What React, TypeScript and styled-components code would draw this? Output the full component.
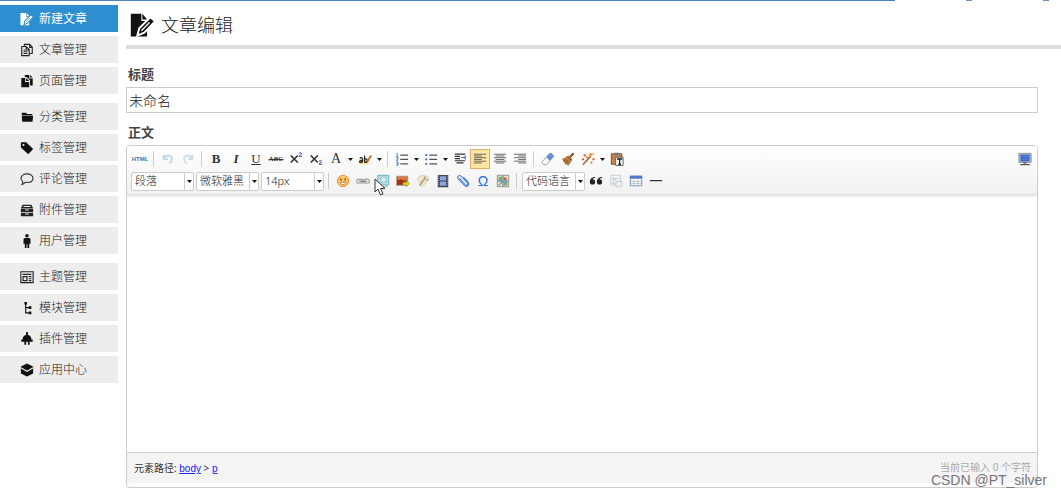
import React from "react";
import styled, { createGlobalStyle } from "styled-components";

const GlobalStyle = createGlobalStyle`
  * { box-sizing: border-box; }
  body {
    margin: 0;
    background: #fff;
    color: #333;
    font-family: "Noto Sans", "Noto Sans CJK SC", sans-serif;
    font-size: 12px;
  }
  svg { display: block; flex: none; }
`;

const Page = styled.div`
  position: relative;
  padding-bottom: 8px;
`;

const TopStrip = styled.div`
  display: flex;
  gap: 71px;
  height: 1px;
  padding-right: 12px;
`;
const TopLine = styled.div`
  flex: 1;
  background: #4c83bb;
`;
const TopMark = styled.div`
  width: 6px;
  background: #6f8fc0;
`;

const Columns = styled.div`
  display: flex;
`;

const Sidebar = styled.nav`
  flex: none;
  width: 118px;
  display: flex;
  flex-direction: column;
  gap: 9px;
  padding-top: 4px;
`;
const NavGroup = styled.div`
  display: flex;
  flex-direction: column;
  gap: 4px;
`;
const NavLink = styled.a<{ $active?: boolean }>`
  display: flex;
  align-items: center;
  gap: 5px;
  height: 27px;
  padding-left: 20px;
  font-size: 12px;
  font-weight: ${(p) => (p.$active ? 400 : 300)};
  line-height: 26px;
  text-decoration: none;
  color: ${(p) => (p.$active ? "#fff" : "#222")};
  background: ${(p) => (p.$active ? "#2d8fcf" : "#ededed")};
`;

const Main = styled.main`
  flex: 1;
  min-width: 0;
  padding-left: 8px;
`;
const Heading = styled.header`
  display: flex;
  align-items: center;
  gap: 5px;
  height: 48px;
  padding: 6px 0 3px 4px;
  border-bottom: 4px solid #dedede;
  color: #111;
  h1 {
    margin: 0;
    font-size: 18px;
    font-weight: 300;
    line-height: 24px;
    color: #222;
  }
`;
const Form = styled.form`
  padding: 15px 23px 0 0;
`;
const Label = styled.label`
  display: block;
  padding: 0 2px;
  height: 23px;
  line-height: 20px;
  font-size: 13px;
  font-weight: 700;
  color: #444;
`;
const TitleInput = styled.input`
  display: block;
  width: 100%;
  height: 26px;
  margin-bottom: 9px;
  padding: 0 2px;
  border: 1px solid #ccc;
  font-family: inherit;
  font-size: 14px;
  font-weight: 300;
  color: #222;
  outline: none;
`;

const Editor = styled.section`
  border: 1px solid #ccc;
  border-radius: 4px;
  overflow: hidden;
  background: #fff;
`;
const Toolbar = styled.div`
  padding: 2px 2px 2px 3px;
  background: linear-gradient(#fff, #f1f1f1);
  border-bottom: 1px solid #dedede;
  box-shadow: 0 1px 3px #ddd;
`;
const ToolRow = styled.div`
  display: flex;
  align-items: center;
  height: 22px;
`;
const Tool = styled.button<{ $on?: boolean; $faded?: boolean }>`
  position: relative;
  display: flex;
  align-items: center;
  justify-content: center;
  flex: none;
  width: 20px;
  height: 20px;
  padding: 0;
  border: 1px solid ${(p) => (p.$on ? "#dcac6c" : "transparent")};
  background: ${(p) => (p.$on ? "#ffe69f" : "transparent")};
  svg { opacity: ${(p) => (p.$faded ? 0.4 : 1)}; }
`;
const ArrowButton = styled.button`
  display: flex;
  align-items: center;
  justify-content: center;
  flex: none;
  width: 9px;
  height: 20px;
  padding: 0;
  border: 0;
  background: transparent;
`;
const Separator = styled.span`
  flex: none;
  width: 1px;
  height: 16px;
  margin: 0 4px 0 3px;
  background: #ccc;
`;
const Spacer = styled.span`
  flex: 1;
`;
const Picker = styled.span`
  display: flex;
  flex: none;
  align-items: center;
  width: 63px;
  height: 19px;
  margin: 0 1px;
  border: 1px solid #ccc;
  border-radius: 2px;
  background: #fff;
`;
const PickerSelect = styled.select`
  appearance: none;
  width: 53px;
  height: 17px;
  padding: 0 0 0 3px;
  border: 0;
  border-right: 1px solid #ccc;
  background: transparent;
  font-family: inherit;
  font-size: 11px;
  font-weight: 300;
  line-height: 16px;
  color: #222;
  outline: none;
`;
const PickerArrow = styled.span`
  flex: 1;
  display: flex;
  justify-content: center;
`;
const Content = styled.textarea`
  display: block;
  width: 100%;
  height: 257px;
  padding: 8px;
  border: 0;
  resize: none;
  outline: none;
  background: transparent;
  font-family: inherit;
  font-size: 14px;
`;
const StatusBar = styled.footer`
  display: flex;
  justify-content: space-between;
  height: 31px;
  padding: 0 6px 0 7px;
  margin-bottom: 4px;
  border-top: 1px solid #ccc;
  background: #f4f4f5;
  font-size: 10px;
  line-height: 30px;
  color: #333;
  a { color: #22e; font-family: "Liberation Sans", sans-serif; }
`;
const Count = styled.span`
  line-height: 28px;
  color: #aaa;
`;
const Watermark = styled.div`
  position: absolute;
  right: 14px;
  bottom: 6px;
  font-family: "Liberation Sans", Arial, sans-serif;
  font-size: 14px;
  line-height: 20px;
  color: #777;
`;
const Pointer = styled.span`
  position: absolute;
  left: 0;
  top: 6px;
  pointer-events: none;
`;

const Svg = ({ children, size = 14 }: { children: React.ReactNode; size?: number }) => (
  <svg width={size} height={size} viewBox="0 0 16 16" fill="none" aria-hidden="true">
    {children}
  </svg>
);

const Caret = () => (
  <svg width="5" height="3" viewBox="0 0 5 3" aria-hidden="true">
    <path d="M0 0h5L2.5 3z" fill="#111" />
  </svg>
);

const MousePointer = () => (
  <Pointer>
    <svg width="12" height="18" viewBox="0 0 12 18" aria-hidden="true">
      <path d="M1 1v13l3-3 2.500 6 2.500-1-2.500-5.500H11z" fill="#fff" stroke="#333" />
    </svg>
  </Pointer>
);

const EditPage = ({ size, halo }: { size: number; halo: string }) => (
  <Svg size={size}>
    <path d="M.5 1H7v4.500h3.500V15H.5z" fill="currentColor" />
    <path d="M7.600 1l3 3.600h-3z" fill="currentColor" />
    <path d="M4.500 14.500L5.700 10l6.800-6.800 3 2.500-6.700 7z" fill="currentColor" stroke={halo} strokeWidth="1.200" />
    <path d="M7 11.500l5-5" stroke={halo} strokeWidth=".8" />
  </Svg>
);

const navIcons: Record<string, React.ReactNode> = {
  articles: (
    <g stroke="#222" strokeWidth="1.300">
      <path d="M5 4V1.500h6L14 4.500V12h-3M11 1.500V5h3" />
      <path d="M2 4h5l3.500 3.500v7H2zM7 4v4h3.500M4 8h2M4 10h4.500M4 12h4.500" />
    </g>
  ),
  pages: (
    <g fill="#111">
      <path d="M5.500 1h5v4h4v8h-3V7L7.500 3.500h-2zM11.500 1l3 3h-3z" />
      <path d="M1.500 4.500H6V9h4.500v6h-9zM7 4.500L10.500 8H7z" />
    </g>
  ),
  folder: <path d="M2 3h5l1 1.500h6V6H2zM2 6.500h13l-.7 7H2.500z" fill="#111" />,
  tag: <path fillRule="evenodd" d="M1 2.500Q1 1.500 2 1.500h5L15 9l-5.500 6L1 7.500zM4 3.300a1.200 1.200 0 100 2.400 1.200 1.200 0 000-2.400z" fill="#111" />,
  comment: <path d="M8 2.200c4 0 6.800 2 6.800 4.900S12 12 8 12c-.8 0-1.300 0-2-.2C5 13 3.800 14 2.200 14.300c.8-1 1-2 1-3.300C1.800 10 1.200 8.700 1.200 7.100c0-2.900 2.800-4.900 6.800-4.900z" stroke="#333" strokeWidth="1.300" />,
  drawer: (
    <g>
      <path d="M3 2h10l2 4H1zM1 6.700h14v3.600H1zM1 11h14v4H1z" fill="#222" />
      <path d="M4 4h8M6 8h4M6 12.500h4" stroke="#eee" strokeWidth="1.200" />
    </g>
  ),
  user: <path d="M8 0a2 2 0 110 4 2 2 0 010-4zM5.500 4.700h5Q12 5 12 6.500V11h-1.500v5h-2v-4h-1v4h-2v-5H4V6.500Q4 5 5.500 4.700z" fill="#111" />,
  theme: <path d="M1 2h14v12.500H1zM3 5h10M3.500 7.500H8v4.700H3.500zM10 7.500h3M10 10h3M10 12.200h3" stroke="#222" strokeWidth="1.300" />,
  tree: (
    <g fill="#111">
      <path d="M5 1h3v3H5zM10 6h3v3h-3zM10 12h3v3h-3z" />
      <path d="M6.500 3v10.500H11M6.500 7.500H11" stroke="#111" strokeWidth="1.300" fill="none" />
    </g>
  ),
  plug: <path d="M7 0h2v3q4 1 4 5.500h1.500V11H11v3.500H9V11H7v3.500H5V11H1.500V8.500H3Q3 4 7 3z" fill="#111" />,
  cube: (
    <g>
      <path d="M8 .5L15 4v8l-7 3.500L1 12V4z" fill="#111" />
      <path d="M1 5.500l7 4 7-4" stroke="#eee" strokeWidth="1.200" />
    </g>
  ),
};

const groups = [
  [
    { text: "新建文章", icon: "edit" },
    { text: "文章管理", icon: "articles" },
    { text: "页面管理", icon: "pages" },
  ],
  [
    { text: "分类管理", icon: "folder" },
    { text: "标签管理", icon: "tag" },
    { text: "评论管理", icon: "comment" },
    { text: "附件管理", icon: "drawer" },
    { text: "用户管理", icon: "user" },
  ],
  [
    { text: "主题管理", icon: "theme" },
    { text: "模块管理", icon: "tree" },
    { text: "插件管理", icon: "plug" },
    { text: "应用中心", icon: "cube" },
  ],
];

const Glyph = styled.span<{ $size?: number; $serif?: boolean; $bold?: boolean; $italic?: boolean; $line?: string; $tone?: string }>`
  font-family: ${(p) => (p.$serif ? '"Liberation Serif", serif' : '"Liberation Sans", sans-serif')};
  font-size: ${(p) => p.$size ?? 13}px;
  font-weight: ${(p) => (p.$bold ? 700 : 400)};
  font-style: ${(p) => (p.$italic ? "italic" : "normal")};
  text-decoration: ${(p) => p.$line ?? "none"};
  line-height: 16px;
  color: ${(p) => p.$tone ?? "#333"};
  white-space: nowrap;
`;

const lines = (rows: [number, number][]) => (
  <path d={rows.map(([x, w], i) => `M${x} ${2.5 + i * 2}h${w}`).join("")} stroke="#555" strokeWidth="1" />
);

type ToolDef = { name: string; face: React.ReactNode; arrow?: boolean; on?: boolean; faded?: boolean };

const history: ToolDef[] = [
  { name: "撤销", faded: true, face: <Svg><path d="M3 3v5h5M3 8c2-5 9-5 9.500 0 0 2-1 3.500-3 5" stroke="#5d9fd6" strokeWidth="2" /></Svg> },
  { name: "重做", faded: true, face: <Svg><path d="M13 3v5H8M13 8c-2-5-9-5-9.500 0 0 2 1 3.500 3 5" stroke="#8bb0ca" strokeWidth="2" /></Svg> },
];

const textTools: ToolDef[] = [
  { name: "加粗", face: <Glyph $serif $bold>B</Glyph> },
  { name: "斜体", face: <Glyph $serif $bold $italic>I</Glyph> },
  { name: "下划线", face: <Glyph $serif $line="underline">U</Glyph> },
  { name: "删除线", face: <Glyph $serif $bold $size={7} $line="line-through">ABC</Glyph> },
  {
    name: "上标",
    face: <Svg><path d="M2 4l8 8M10 4l-8 8" stroke="#333" strokeWidth="1.900" /><path d="M11.500 2c.3-2 3.500-1.500 2.500.3L11.500 5H15" stroke="#33b" strokeWidth="1" /></Svg>,
  },
  {
    name: "下标",
    face: <Svg><path d="M2 4l8 8M10 4l-8 8" stroke="#333" strokeWidth="1.900" /><path d="M11.500 11c.3-2 3.500-1.500 2.500.3L11.500 14H15" stroke="#335" strokeWidth="1" /></Svg>,
  },
  { name: "字体颜色", arrow: true, face: <Glyph $serif $size={14}>A</Glyph> },
  {
    name: "背景色",
    arrow: true,
    face: (
      <Svg>
        <path d="M1 8h11v6H1z" fill="#ffe08a" />
        <path d="M2 7q3-1.500 3 1v4M5 9.500c-4-.3-4 3-1.500 2.500L5 11M7.500 4v8M7.500 8c4-1.500 4 4 0 4" stroke="#222" strokeWidth="1.400" />
        <path d="M10 12l5-8" stroke="#b8651e" strokeWidth="1.800" />
      </Svg>
    ),
  },
];

const blockTools: ToolDef[] = [
  {
    name: "有序列表",
    arrow: true,
    face: <Svg><path d="M2.500 1v4M1.500 5h2M1.500 6.500h2V8l-2 1.500h2M1.500 11.500h2v3.500h-2M2 13.200h1.500" stroke="#3a6fb5" /><path d="M6 3.500h9M6 8.500h9M6 13.500h9" stroke="#555" strokeWidth="1.300" /></Svg>,
  },
  {
    name: "无序列表",
    arrow: true,
    face: <Svg><path d="M1.500 2.500h2v2h-2zM1.500 7.500h2v2h-2zM1.500 12.500h2v2h-2z" fill="#3958bd" /><path d="M6 3.500h9M6 8.500h9M6 13.500h9" stroke="#555" strokeWidth="1.300" /></Svg>,
  },
  {
    name: "首行缩进",
    face: <Svg><path d="M2 2.500h12M2 5h6M2 7.500h6M2 10h12M4 12.500h8" stroke="#333" strokeWidth="1.400" /><path d="M9 6.300h5M14 4v4.500" stroke="#3d6fbd" strokeWidth="1.300" /></Svg>,
  },
  { name: "居左对齐", on: true, face: <Svg>{lines([[1, 14], [1, 9], [1, 14], [1, 9], [1, 14], [1, 9]])}</Svg> },
  { name: "居中对齐", face: <Svg>{lines([[1, 14], [3, 10], [1, 14], [3, 10], [1, 14], [3, 10]])}</Svg> },
  { name: "居右对齐", face: <Svg>{lines([[1, 14], [6, 9], [1, 14], [6, 9], [1, 14], [6, 9]])}</Svg> },
];

const formatTools: ToolDef[] = [
  {
    name: "清除格式",
    face: <Svg><path d="M1.500 11L9.500 2q1-1 2 0L14 4q1 1 0 2l-8 8.500H3.500L1.500 13z" fill="#fff" stroke="#8793a9" /><path d="M6 6l4-4.500q1-.7 2 0l2 2q.8 1 0 2L10 10z" fill="#678bd2" /></Svg>,
  },
  {
    name: "格式刷",
    face: <Svg><path d="M10 6l4.500-4.500" stroke="#854e23" strokeWidth="2.400" /><path d="M1 8l8-4 4 4-4 7.500H7.500l-1-2-1 1.500z" fill="#bf8442" /><path d="M7 5l5.500 5M3 9l5 5M5 8l4 4" stroke="#60401f" strokeWidth=".9" /></Svg>,
  },
  {
    name: "自动排版",
    arrow: true,
    face: <Svg><path d="M2 14.500L11 5" stroke="#a86b36" strokeWidth="1.800" /><path d="M11 1v4M9 3h4" stroke="#ef8a27" strokeWidth="1.600" /><path d="M3 2.500h2.500V5H3zM1 7h2.500v2.500H1zM13 7h2.500v2.500H13zM11 11h2v2h-2zM6 5h2v2H6z" fill="#e7623b" /><path d="M13 1h2v2h-2z" fill="#f1b32b" /></Svg>,
  },
  {
    name: "纯文本粘贴",
    face: <Svg><path d="M1.500 2h12v12h-12z" fill="#c28646" stroke="#6f4525" /><path d="M5 .8h5v3H5z" fill="#777" /><path d="M6.500 6H15v9.500H6.500z" fill="#fff" stroke="#555" /><path d="M8 8h6M11 8v6M9.500 14h3" stroke="#123" strokeWidth="1.500" /></Svg>,
  },
];

const insertTools: ToolDef[] = [
  {
    name: "表情",
    face: <Svg><circle cx="8" cy="8" r="6.500" fill="#ffc86a" stroke="#e28a35" /><path d="M5.500 5v2.500M10.500 5v2.500" stroke="#85410d" strokeWidth="1.600" /><path d="M4.500 9.500c1.500 3.500 5.500 3.500 7 0z" fill="#fff" stroke="#a85f22" strokeWidth=".8" /></Svg>,
  },
  {
    name: "超链接",
    face: <Svg><path d="M6 6H3a2 2 0 000 4.500h3M10 6h3a2 2 0 010 4.500h-3M6.500 6.500h3V10h-3z" stroke="#aaa" strokeWidth="1.500" /><path d="M3.500 8.300h9" stroke="#777" strokeWidth="1.200" /></Svg>,
  },
  {
    name: "图片上传",
    face: (
      <>
        <Svg><path d="M2 1.500h12.500v11H2z" fill="#b9dfea" stroke="#64a9bd" /><path d="M5.500 3.500h6v6h-6z" fill="#dff3f5" stroke="#83bccb" /><path d="M6 14.500h7" stroke="#71aabb" /></Svg>
        <MousePointer />
      </>
    ),
  },
  {
    name: "多图上传",
    face: <Svg><path d="M.5 2.500h13V13H.5z" fill="#77452c" stroke="#b5a898" /><path d="M1.500 3.500h11V7h-11z" fill="#e8793b" /><path d="M1.500 7l5-1 3 3v3h-8z" fill="#a82c1a" /><path d="M8 9.500h3.500v-2l4 3.500-4 3.500v-2H8z" fill="#f3bd22" stroke="#8fa329" strokeWidth=".8" /></Svg>,
  },
  {
    name: "涂鸦",
    face: <Svg><path d="M3 3q5-3 10 0 3 4-2 6 0 5-6 5 1-3-1-5-4-2-1-6z" fill="#eee7d2" stroke="#d7d0bd" /><path d="M4 13l7-9" stroke="#c2ad6f" strokeWidth="2" /><path d="M9 3h2v2H9zM12 6h2v2h-2zM6 8h2v2H6z" fill="#8fa58d" /></Svg>,
  },
  {
    name: "视频",
    face: <Svg><path d="M2 1h12v14H2z" fill="#3c4251" /><path d="M4.500 2.500h7v5h-7zM4.500 8.500h7v5h-7z" fill="#8da4dd" /><path d="M3.200 2v12M12.800 2v12" stroke="#ccd" strokeDasharray="1 1.500" /></Svg>,
  },
  {
    name: "附件",
    face: <Svg><path d="M4 5l6.500 7c1.800 1.800 4-.2 2.300-2.200L6 2.600C3.700.4.500 3.300 2.700 5.800l6.600 7c3.300 3.300 7.500-.4 4.200-4L8.500 3.500" stroke="#4d87d3" strokeWidth="1.200" /></Svg>,
  },
  { name: "特殊字符", face: <Glyph $size={14} $tone="#2465d8">Ω</Glyph> },
  {
    name: "地图",
    face: <Svg><path d="M1.500 1.500h13v13h-13z" fill="#eee5b6" stroke="#888" /><path d="M3 3h4v4H3zM9 9h4v4H9z" fill="#74aa6a" /><path d="M8 2v12M2 8h12M3 13l4-4" stroke="#6f8fc8" strokeWidth="1.500" /><path d="M9 4h3v3H9z" fill="#c8504a" /></Svg>,
  },
];

const tailTools: ToolDef[] = [
  {
    name: "引用",
    face: <Svg><path d="M7 3.500C3 3.500 1 6 1 9a3 3 0 103-3c.5-1 1.500-1.500 3-1.500zM15 3.500C11 3.500 9 6 9 9a3 3 0 103-3c.5-1 1.500-1.500 3-1.500z" fill="#222" /></Svg>,
  },
  {
    name: "分页",
    faded: true,
    face: <Svg><path d="M2 1.500h11v11H2z" fill="#eef5fa" stroke="#789" /><path d="M4 4l1 3 1-2 1 2 1-3M9 5h2" stroke="#3d6fa5" /><path d="M8 8.500h6.500v6H8z" fill="#ddeaf2" stroke="#68a" /><path d="M3 9h4M3 11h4" stroke="#789" /></Svg>,
  },
  {
    name: "插入表格",
    face: <Svg><path d="M1.500 2.500h13v11h-13z" fill="#fff" stroke="#6589b5" /><path d="M1 2h14v3.500H1z" fill="#5079cd" /><path d="M2 8.500h12M2 11h12M5.500 6v7.500M10 6v7.500" stroke="#a9b8cf" strokeWidth=".9" /></Svg>,
  },
  { name: "分隔线", face: <Svg><path d="M1 7.500h14" stroke="#333" strokeWidth="1.400" /></Svg> },
];

const Tools = ({ items }: { items: ToolDef[] }) => (
  <>
    {items.map((t) => (
      <React.Fragment key={t.name}>
        <Tool type="button" aria-label={t.name} $on={t.on} $faded={t.faded}>
          {t.face}
        </Tool>
        {t.arrow && (
          <ArrowButton type="button" aria-label={`${t.name}选项`}>
            <Caret />
          </ArrowButton>
        )}
      </React.Fragment>
    ))}
  </>
);

const Select = ({ label, value }: { label: string; value: string }) => (
  <Picker>
    <PickerSelect aria-label={label} defaultValue={value}>
      <option>{value}</option>
    </PickerSelect>
    <PickerArrow>
      <Caret />
    </PickerArrow>
  </Picker>
);

export default function App() {
  return (
    <Page>
      <GlobalStyle />
      <TopStrip>
        <TopLine />
        <TopMark />
        <TopMark />
      </TopStrip>
      <Columns>
        <Sidebar>
          {groups.map((group, i) => (
            <NavGroup key={i}>
              {group.map(({ text, icon }) => (
                <NavLink key={text} href="#" $active={icon === "edit"}>
                  {icon === "edit" ? <EditPage size={14} halo="#2d8fcf" /> : <Svg>{navIcons[icon]}</Svg>}
                  {text}
                </NavLink>
              ))}
            </NavGroup>
          ))}
        </Sidebar>
        <Main>
          <Heading>
            <EditPage size={26} halo="#fff" />
            <h1>文章编辑</h1>
          </Heading>
          <Form>
            <Label htmlFor="title">标题</Label>
            <TitleInput id="title" defaultValue="未命名" />
            <Label htmlFor="content">正文</Label>
            <Editor>
              <Toolbar>
                <ToolRow>
                  <Tool type="button" aria-label="源代码">
                    <Glyph $bold $size={6} $tone="#47759f">HTML</Glyph>
                  </Tool>
                  <Separator />
                  <Tools items={history} />
                  <Separator />
                  <Tools items={textTools} />
                  <Separator />
                  <Tools items={blockTools} />
                  <Separator />
                  <Tools items={formatTools} />
                  <Spacer />
                  <Tool type="button" aria-label="全屏">
                    <Svg>
                      <path d="M1 1.500h14V12H1z" fill="#a9b3c0" stroke="#8994a3" />
                      <path d="M3 3h10v7.500H3z" fill="#3461cf" />
                      <path d="M4 5h8M4 8h8" stroke="#7596e6" />
                      <path d="M6 12.500h4M2.500 14.500h11" stroke="#555" strokeWidth="1.400" />
                    </Svg>
                  </Tool>
                </ToolRow>
                <ToolRow>
                  <Select label="段落格式" value="段落" />
                  <Select label="字体" value="微软雅黑" />
                  <Select label="字号" value="14px" />
                  <Separator />
                  <Tools items={insertTools} />
                  <Separator />
                  <Select label="代码语言" value="代码语言" />
                  <Tools items={tailTools} />
                </ToolRow>
              </Toolbar>
              <Content id="content" />
              <StatusBar>
                <span>
                  元素路径: <a href="#body">body</a> &gt; <a href="#p">p</a>
                </span>
                <Count>当前已输入 0 个字符</Count>
              </StatusBar>
            </Editor>
          </Form>
        </Main>
      </Columns>
      <Watermark>CSDN @PT_silver</Watermark>
    </Page>
  );
}
